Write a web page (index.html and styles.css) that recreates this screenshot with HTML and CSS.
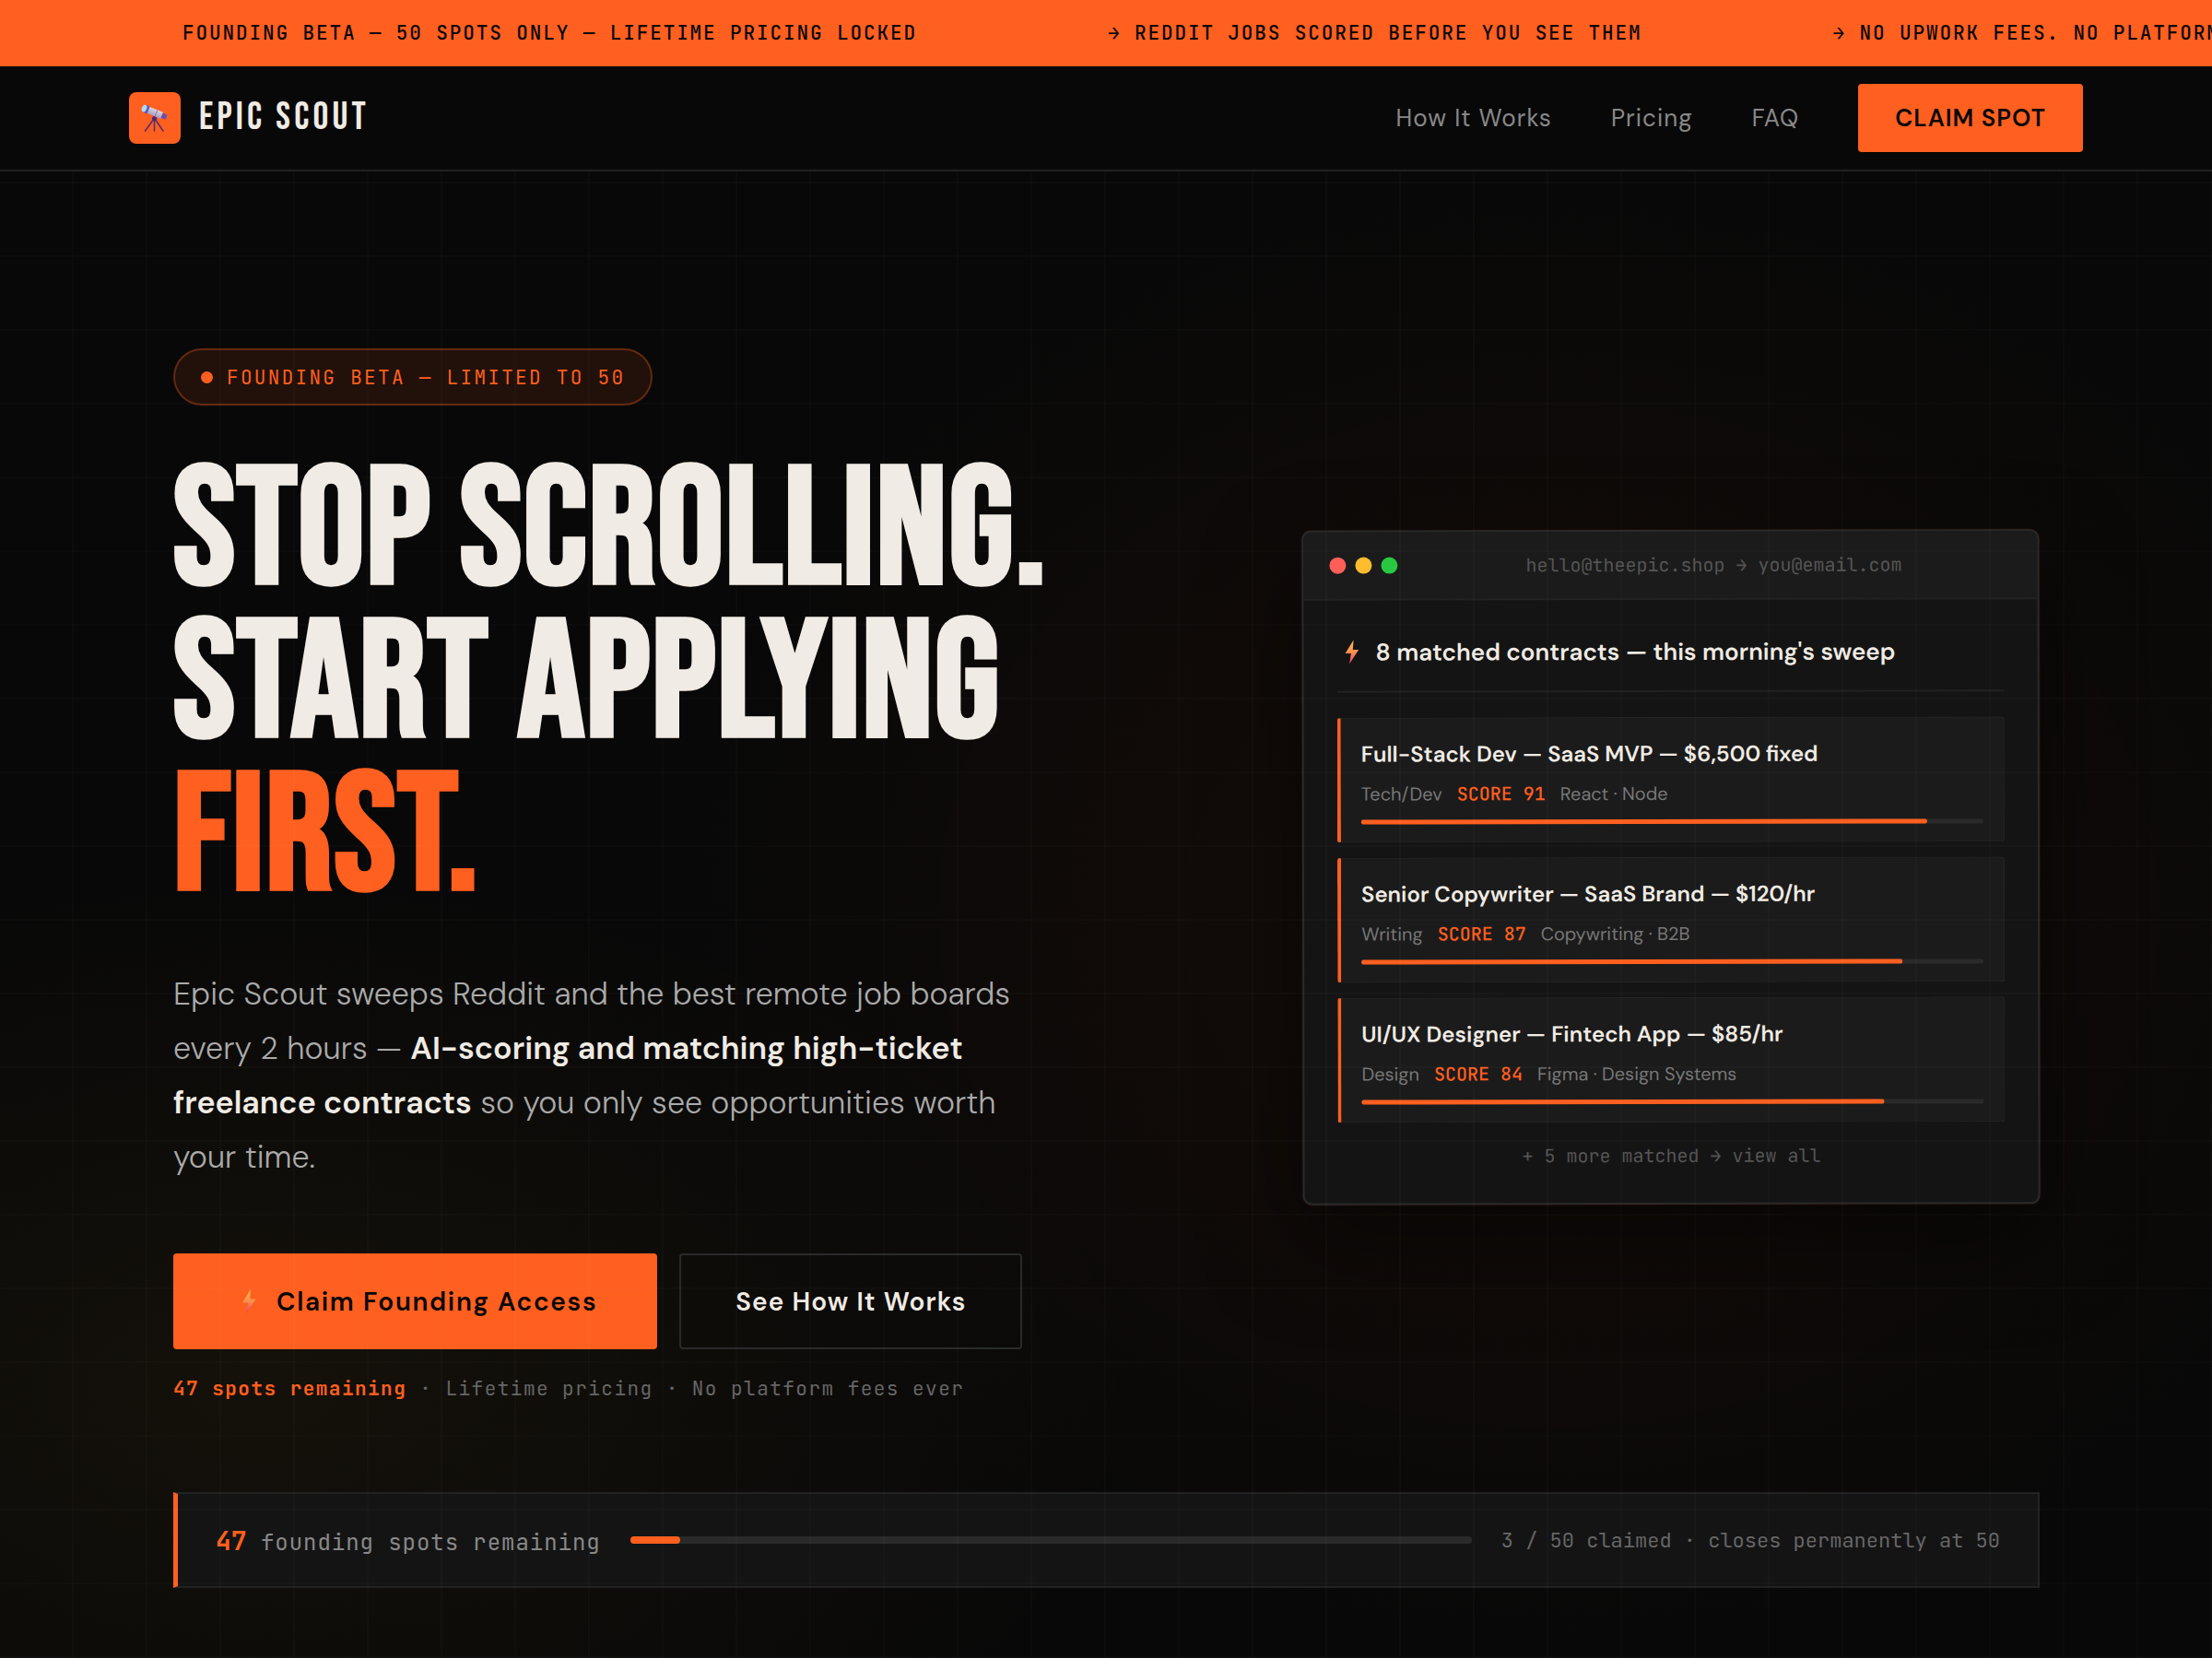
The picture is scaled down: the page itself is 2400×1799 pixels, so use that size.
FILE: index.html
```html
<!DOCTYPE html>
<html lang="en">
<head>
  <meta charset="UTF-8">
  <meta name="viewport" content="width=device-width, initial-scale=1.0">
  <title>Epic Scout – Stop Scrolling. Start Applying First.</title>
  <link rel="stylesheet" href="styles.css">
</head>
<body>
  <svg class="defs" aria-hidden="true">
    <defs>
      <linearGradient id="boltFill" x1="0" y1="0" x2="0" y2="1">
        <stop offset="0" stop-color="#ffc24a"/>
        <stop offset="0.5" stop-color="#fb8f50"/>
        <stop offset="1" stop-color="#e2406f"/>
      </linearGradient>
      <linearGradient id="tubeFill" x1="0" y1="0" x2="0" y2="1">
        <stop offset="0" stop-color="#d9d3e4"/>
        <stop offset="1" stop-color="#a99fc0"/>
      </linearGradient>
    </defs>
  </svg>

  <div class="ticker">
    <div class="ticker-track">
      <span>FOUNDING BETA — 50 SPOTS ONLY — LIFETIME PRICING LOCKED</span>
      <span>→ REDDIT JOBS SCORED BEFORE YOU SEE THEM</span>
      <span>→ NO UPWORK FEES. NO PLATFORM CUT.</span>
    </div>
  </div>

  <nav class="nav">
    <a class="logo" href="#">
      <span class="logo-icon">
        <svg viewBox="0 0 56 56" aria-hidden="true">
          <g stroke="#5b2d6e" stroke-width="1.6" stroke-linecap="round">
            <path d="M27 29 17.500 42"/>
            <path d="M27.500 29V42"/>
            <path d="M28 29 37 42"/>
          </g>
          <circle cx="27.500" cy="28.500" r="2.600" fill="#4b2a7a"/>
          <g transform="rotate(22 28 22.500)">
            <rect x="17" y="18.500" width="19" height="7.500" fill="url(#tubeFill)"/>
            <rect x="29" y="18.500" width="1" height="7.500" fill="#8d82aa"/>
            <rect x="15.500" y="18" width="5" height="8.500" rx="1" fill="#6b55b5"/>
            <rect x="36" y="19.500" width="5.500" height="5.500" rx="1" fill="#6a4fb0"/>
            <ellipse cx="15.500" cy="22.200" rx="2.600" ry="4" fill="#a9dcf5"/>
          </g>
        </svg>
      </span>
      <span class="logo-text">EPIC SCOUT</span>
    </a>
    <div class="nav-links">
      <a href="#how">How It Works</a>
      <a href="#pricing">Pricing</a>
      <a href="#faq">FAQ</a>
      <a class="nav-cta" href="#claim">CLAIM SPOT</a>
    </div>
  </nav>

  <main class="hero">
    <div class="hero-inner">
      <div class="hero-grid">
        <div class="hero-copy">
          <div class="badge"><span class="badge-dot"></span>FOUNDING BETA — LIMITED TO 50</div>
          <h1>STOP SCROLLING.<br>START APPLYING<br><span class="accent">FIRST.</span></h1>
          <p class="lead">Epic Scout sweeps Reddit and the best remote job boards every 2 hours — <strong>AI-scoring and matching high-ticket freelance contracts</strong> so you only see opportunities worth your time.</p>
          <div class="actions">
            <a class="btn btn-primary" href="#claim">
              <svg class="bolt" viewBox="0 0 16 28" aria-hidden="true"><path d="M10 1 1 15.500H7.200L5.500 27 15.500 11.500H9.200Z" fill="url(#boltFill)"/></svg>
              Claim Founding Access
            </a>
            <a class="btn btn-ghost" href="#how">See How It Works</a>
          </div>
          <p class="note"><strong>47 spots remaining</strong> · Lifetime pricing · No platform fees ever</p>
        </div>

        <div class="hero-visual">
          <div class="mail">
            <div class="mail-bar">
              <span class="dot red"></span>
              <span class="dot yellow"></span>
              <span class="dot green"></span>
              <span class="mail-from">hello@theepic.shop → you@email.com</span>
            </div>
            <div class="mail-body">
              <h2 class="mail-title">
                <svg class="bolt" viewBox="0 0 16 28" aria-hidden="true"><path d="M10 1 1 15.500H7.200L5.500 27 15.500 11.500H9.200Z" fill="url(#boltFill)"/></svg>
                8 matched contracts — this morning's sweep
              </h2>
              <div class="jobs">
                <div class="job">
                  <h3>Full-Stack Dev — SaaS MVP — $6,500 fixed</h3>
                  <div class="job-meta"><span>Tech/Dev</span><span class="score">SCORE 91</span><span>React · Node</span></div>
                  <div class="meter"><div class="meter-fill" style="width: 91%"></div></div>
                </div>
                <div class="job">
                  <h3>Senior Copywriter — SaaS Brand — $120/hr</h3>
                  <div class="job-meta"><span>Writing</span><span class="score">SCORE 87</span><span>Copywriting · B2B</span></div>
                  <div class="meter"><div class="meter-fill" style="width: 87%"></div></div>
                </div>
                <div class="job">
                  <h3>UI/UX Designer — Fintech App — $85/hr</h3>
                  <div class="job-meta"><span>Design</span><span class="score">SCORE 84</span><span>Figma · Design Systems</span></div>
                  <div class="meter"><div class="meter-fill" style="width: 84%"></div></div>
                </div>
              </div>
              <p class="mail-more">+ 5 more matched → view all</p>
            </div>
          </div>
        </div>
      </div>

      <div class="spots">
        <div class="spots-label"><strong>47</strong> founding spots remaining</div>
        <div class="spots-track"><div class="spots-fill" style="width: 6%"></div></div>
        <div class="spots-info">3 / 50 claimed · closes permanently at 50</div>
      </div>
    </div>
  </main>
</body>
</html>
```
FILE: styles.css
```css
:root {
  --bg: #080808;
  --panel: #141414;
  --panel-2: #1b1b1b;
  --line: #222;
  --orange: #ff5f1f;
  --cream: #f0ebe4;
  --display: "Bebas Neue", "Liberation Sans Narrow", "Liberation Sans", sans-serif;
  --sans: "DM Sans", "Inter", sans-serif;
  --mono: "JetBrains Mono", "DejaVu Sans Mono", monospace;
}
* {
  margin: 0;
  padding: 0;
  box-sizing: border-box;
}
body {
  background: var(--bg);
  color: var(--cream);
  font-family: var(--sans);
  overflow-x: hidden;
}
a {
  color: inherit;
  text-decoration: none;
}
.defs {
  position: absolute;
  width: 0;
  height: 0;
}

/* ticker */
.ticker {
  background: var(--orange);
  color: #080808;
  overflow: hidden;
}
.ticker-track {
  display: flex;
  gap: 207px;
  padding-left: 198px;
  font-family: var(--mono);
  font-size: 21px;
  font-weight: 500;
  letter-spacing: 0.09em;
  line-height: 72px;
  white-space: nowrap;
}

/* nav */
.nav {
  display: flex;
  align-items: center;
  justify-content: space-between;
  height: 114px;
  padding: 0 140px;
  background: var(--bg);
  border-bottom: 2px solid var(--line);
}
.logo {
  display: flex;
  align-items: center;
  gap: 20px;
}
.logo-icon {
  width: 56px;
  height: 56px;
  border-radius: 8px;
  background: var(--orange);
}
.logo-icon svg {
  display: block;
}
.logo-text {
  font-family: var(--display);
  font-size: 42px;
  letter-spacing: 0.1em;
  line-height: 48px;
}
.nav-links {
  display: flex;
  align-items: center;
  gap: 64px;
  font-size: 26px;
  letter-spacing: 0.04em;
  color: #888;
}
.nav-cta {
  padding: 0 40px;
  border-radius: 4px;
  background: var(--orange);
  color: #080808;
  font-weight: 600;
  line-height: 74px;
}

/* hero */
.hero {
  position: relative;
  background:
    radial-gradient(ellipse 40% 50% at 70% 50%, rgba(255, 95, 31, 0.06), transparent),
    radial-gradient(ellipse 40% 35% at 12% 82%, rgba(255, 184, 60, 0.05), transparent);
}
/* faint grid over the whole section */
.hero::after {
  content: "";
  position: absolute;
  inset: 0;
  background-image:
    linear-gradient(rgba(255, 255, 255, 0.016) 2px, transparent 2px),
    linear-gradient(90deg, rgba(255, 255, 255, 0.016) 2px, transparent 2px);
  background-size: 80px 80px;
  background-position: -2px 11px;
  pointer-events: none;
}
.hero-inner {
  max-width: 2134px;
  margin: 0 auto;
  padding: 192px 54px 76px 55px;
}
.hero-grid {
  display: grid;
  grid-template-columns: 1fr 800px;
  gap: 96px;
  align-items: center;
}
.badge {
  display: inline-flex;
  align-items: center;
  gap: 15px;
  height: 62px;
  padding: 0 28px;
  border: 2px solid rgba(255, 95, 31, 0.3);
  border-radius: 31px;
  background: rgba(255, 95, 31, 0.1);
  color: var(--orange);
  font-family: var(--mono);
  font-size: 21px;
  letter-spacing: 0.11em;
}
.badge-dot {
  width: 13px;
  height: 13px;
  border-radius: 50%;
  background: var(--orange);
}
h1 {
  margin-top: 55px;
  font-family: var(--display);
  font-size: 180px;
  font-weight: 700;
  line-height: 166px;
  letter-spacing: 0.01em;
  white-space: nowrap;
}
.accent {
  color: var(--orange);
}
.lead {
  max-width: 940px;
  margin-top: 56px;
  color: #aaa;
  font-size: 34px;
  font-weight: 300;
  line-height: 59px;
}
.lead strong {
  color: var(--cream);
  font-weight: 600;
}
.actions {
  display: flex;
  gap: 24px;
  margin-top: 75px;
}
.btn {
  display: flex;
  align-items: center;
  height: 104px;
  border-radius: 4px;
  font-size: 28px;
  font-weight: 600;
}
.bolt {
  width: 16px;
  height: 28px;
  flex: none;
}
.btn-primary {
  gap: 22px;
  padding: 0 65px 0 74px;
  background: var(--orange);
  color: #080808;
  letter-spacing: 0.06em;
}
.btn-ghost {
  padding: 0 59px;
  border: 2px solid #2a2a2a;
  letter-spacing: 0.04em;
}
.note {
  margin-top: 28px;
  color: #666;
  font-family: var(--mono);
  font-size: 21px;
  letter-spacing: 0.07em;
  line-height: 30px;
}
.note strong {
  color: var(--orange);
}

/* mail preview */
.hero-visual {
  padding-bottom: 18px;
}
.mail {
  border: 2px solid #2a2a2a;
  border-radius: 10px;
  background: var(--panel);
  box-shadow: 0 0 0 1px rgba(255, 95, 31, 0.08), 0 40px 100px rgba(0, 0, 0, 0.5);
  overflow: hidden;
  transform: rotate(-0.1deg);
}
.mail-bar {
  display: flex;
  align-items: center;
  gap: 10px;
  height: 74px;
  padding: 0 28px;
  background: var(--panel-2);
  border-bottom: 2px solid var(--line);
}
.dot {
  width: 18px;
  height: 18px;
  border-radius: 50%;
}
.red { background: #ff5f57; }
.yellow { background: #febc2e; }
.green { background: #28c840; }
.mail-from {
  flex: 1;
  padding-left: 10px;
  color: #555;
  font-family: var(--mono);
  font-size: 20px;
  text-align: center;
}
.mail-body {
  padding: 36px;
}
.mail-title {
  display: flex;
  align-items: center;
  gap: 18px;
  padding: 0 0 22px 8px;
  border-bottom: 2px solid var(--line);
  font-size: 26px;
  font-weight: 600;
  line-height: 40px;
}
.jobs {
  display: flex;
  flex-direction: column;
  gap: 16px;
  margin-top: 27px;
}
.job {
  padding: 21px 22px 19px;
  border: 1px solid #252525;
  border-left: 4px solid var(--orange);
  border-radius: 4px;
  background: var(--panel-2);
}
.job h3 {
  font-size: 24px;
  font-weight: 600;
  line-height: 36px;
}
.job-meta {
  display: flex;
  gap: 16px;
  margin-top: 9px;
  color: #777;
  font-size: 20px;
  line-height: 32px;
}
.score {
  color: var(--orange);
  font-family: var(--mono);
  font-weight: 500;
}
.meter {
  height: 5px;
  margin-top: 12px;
  border-radius: 2px;
  background: #2a2a2a;
}
.meter-fill {
  height: 100%;
  border-radius: 2px;
  background: var(--orange);
}
.mail-more {
  margin-top: 21px;
  color: #555;
  font-family: var(--mono);
  font-size: 20px;
  line-height: 30px;
  text-align: center;
}

/* spots bar */
.spots {
  display: flex;
  align-items: center;
  gap: 32px;
  height: 104px;
  margin-top: 97px;
  padding: 0 41px;
  border: 2px solid var(--line);
  border-left: 5px solid var(--orange);
  background: var(--panel);
  font-family: var(--mono);
  white-space: nowrap;
}
.spots-label {
  color: #888;
  font-size: 24px;
  letter-spacing: 0.04em;
}
.spots-label strong {
  color: var(--orange);
  font-size: 28px;
  letter-spacing: 0;
}
.spots-track {
  flex: 1;
  height: 8px;
  border-radius: 4px;
  background: #2a2a2a;
}
.spots-fill {
  height: 100%;
  border-radius: 4px;
  background: var(--orange);
}
.spots-info {
  color: #666;
  font-size: 22px;
}
```
